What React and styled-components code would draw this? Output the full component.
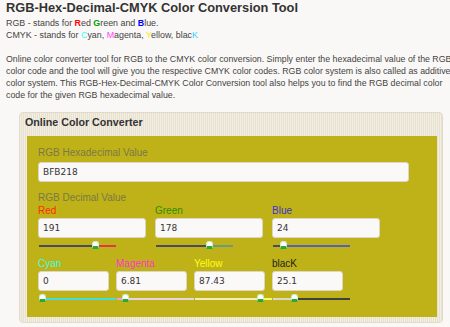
import React from "react";
import styled, { createGlobalStyle } from "styled-components";

const Global = createGlobalStyle`
  html, body { margin: 0; padding: 0; background: #faf8f6; overflow: hidden; }
  body { font-family: "Liberation Sans", Arial, sans-serif; }
`;

const Page = styled.div`
  width: 450px;
  padding: 0 0 0 6px;
  box-sizing: border-box;
  color: #444;
`;

const Title = styled.h1`
  margin: 0;
  padding-top: 1px;
  font-size: 12.8px;
  line-height: 14px;
  font-weight: bold;
  color: #333;
`;

const Intro = styled.div`
  margin-top: 2px;
  font-size: 8.9px;
  line-height: 12px;
  color: #444;
`;

const Key = styled.span`
  color: ${(p) => p.$c};
  font-weight: ${(p) => (p.$bold ? "bold" : "normal")};
`;

const Para = styled.p`
  margin: 12px 0 0;
  font-size: 8.8px;
  line-height: 12px;
  color: #444;
  white-space: nowrap;
`;

const Box = styled.section`
  margin: 11px 0 0 13px;
  width: 424px;
  box-sizing: border-box;
  border: 1px solid #e2dac8;
  border-radius: 4px;
  padding: 0 5px 5px 7px;
  background: repeating-linear-gradient(
    90deg,
    #f3eee4 0px,
    #f3eee4 1px,
    #e9e1cf 1px,
    #e9e1cf 2px
  );
`;

const BoxTitle = styled.h2`
  margin: 0 0 0 -2px;
  padding-top: 3px;
  height: 23px;
  box-sizing: border-box;
  font-size: 10.7px;
  line-height: 13px;
  font-weight: bold;
  color: #333;
`;

const Panel = styled.div`
  background: #bfb218;
  padding: 10px 10px 0 11px;
  height: 181px;
  box-sizing: border-box;
`;

const FieldLabel = styled.div`
  font-size: 10px;
  line-height: ${(p) => p.$lh || 12}px;
  color: ${(p) => p.$c || "#7b7848"};
`;

const Input = styled.input`
  display: block;
  box-sizing: border-box;
  width: ${(p) => p.$w}px;
  height: 20px;
  margin: 1px 0 0;
  border: 1px solid #ddd6c6;
  border-radius: 3px;
  background: #fbf8f8;
  font-family: "DejaVu Sans", sans-serif;
  font-size: 9px;
  color: #333;
  padding: 0 4px;
  outline: none;
`;

const HexInput = styled(Input)`
  margin-top: 2px;
  margin-bottom: 9px;
`;

const Row = styled.div`
  display: grid;
  grid-template-columns: repeat(${(p) => p.$n}, ${(p) => p.$w}px);
  column-gap: ${(p) => p.$gap}px;
  margin-top: ${(p) => p.$mt || 0}px;
`;

const Col = styled.div`
  display: flex;
  flex-direction: column;
`;

const SliderWrap = styled.div`
  position: relative;
  width: 77px;
  height: 9px;
  margin: 3px 0 0 1px;
`;

const Track = styled.div`
  position: absolute;
  left: 0;
  right: 0;
  top: 4px;
  height: 2px;
  background: linear-gradient(
    90deg,
    ${(p) => p.$l} 0%,
    ${(p) => p.$l} var(--pos),
    ${(p) => p.$r} var(--pos),
    ${(p) => p.$r} 100%
  );
`;

const Thumb = styled.div`
  position: absolute;
  top: 0;
  width: 7px;
  height: 8px;
  margin-left: -3px;
  box-sizing: border-box;
  background: #fff;
  border: 1px solid #cfe8cf;
  border-bottom: 3px solid #2ea82e;
  border-radius: 3px 3px 1px 1px;
`;

function Slider({ frac, l, r }) {
  const pos = `${(frac * 100).toFixed(1)}%`;
  return (
    <SliderWrap>
      <Track $l={l} $r={r} style={{ "--pos": pos }} />
      <Thumb style={{ left: `calc(${pos} + ${3 - frac * 6}px)` }} />
    </SliderWrap>
  );
}

const rgb = [
  { label: "Red", c: "#ff2a00", v: "191", f: 191 / 255, l: "#4a4a66", r: "#e0384a" },
  { label: "Green", c: "#2e8c00", v: "178", f: 178 / 255, l: "#4a4a66", r: "#6a9a80" },
  { label: "Blue", c: "#3b33cc", v: "24", f: 24 / 255, l: "#4a4a66", r: "#5560b8" },
];

const cmyk = [
  { label: "Cyan", c: "#3effe0", v: "0", f: 0, l: "#40e0e0", r: "#40e0e0" },
  { label: "Magenta", c: "#ff33cc", v: "6.81", f: 0.0681, l: "#e8a0e0", r: "#e8d4e4" },
  { label: "Yellow", c: "#ffff10", v: "87.43", f: 0.8743, l: "#f0eec0", r: "#fcfc60" },
  { label: "blacK", c: "#222", v: "25.1", f: 0.251, l: "#d8d8d0", r: "#404040" },
];

export default function App() {
  return (
    <>
      <Global />
      <Page>
        <Title>RGB-Hex-Decimal-CMYK Color Conversion Tool</Title>
        <Intro>
          <div>
            RGB - stands for <Key $c="#ff0000" $bold>R</Key>ed <Key $c="#00a000" $bold>G</Key>reen and{" "}
            <Key $c="#0000ff" $bold>B</Key>lue.
          </div>
          <div>
            CMYK - stands for <Key $c="#33ffff">C</Key>yan, <Key $c="#ff44ff">M</Key>agenta,{" "}
            <Key $c="#eeee00">Y</Key>ellow, blac<Key $c="#33ccff">K</Key>
          </div>
        </Intro>
        <Para>
          Online color converter tool for RGB to the CMYK color conversion. Simply enter the hexadecimal value of the RGB
          <br />
          color code and the tool will give you the respective CMYK color codes. RGB color system is also called as additive
          <br />
          color system. This RGB-Hex-Decimal-CMYK Color Conversion tool also helps you to find the RGB decimal color
          <br />
          code for the given RGB hexadecimal value.
        </Para>
        <Box>
          <BoxTitle>Online Color Converter</BoxTitle>
          <Panel>
            <FieldLabel $lh={14}>RGB Hexadecimal Value</FieldLabel>
            <HexInput $w={371} defaultValue="BFB218" />
            <FieldLabel $lh={14}>RGB Decimal Value</FieldLabel>
            <Row $n={3} $w={108} $gap={9}>
              {rgb.map((x) => (
                <Col key={x.label}>
                  <FieldLabel $c={x.c}>{x.label}</FieldLabel>
                  <Input $w={108} defaultValue={x.v} />
                  <Slider frac={x.f} l={x.l} r={x.r} />
                </Col>
              ))}
            </Row>
            <Row $n={4} $w={71} $gap={7} $mt={8}>
              {cmyk.map((x) => (
                <Col key={x.label}>
                  <FieldLabel $c={x.c}>{x.label}</FieldLabel>
                  <Input $w={71} defaultValue={x.v} />
                  <Slider frac={x.f} l={x.l} r={x.r} />
                </Col>
              ))}
            </Row>
          </Panel>
        </Box>
      </Page>
    </>
  );
}
